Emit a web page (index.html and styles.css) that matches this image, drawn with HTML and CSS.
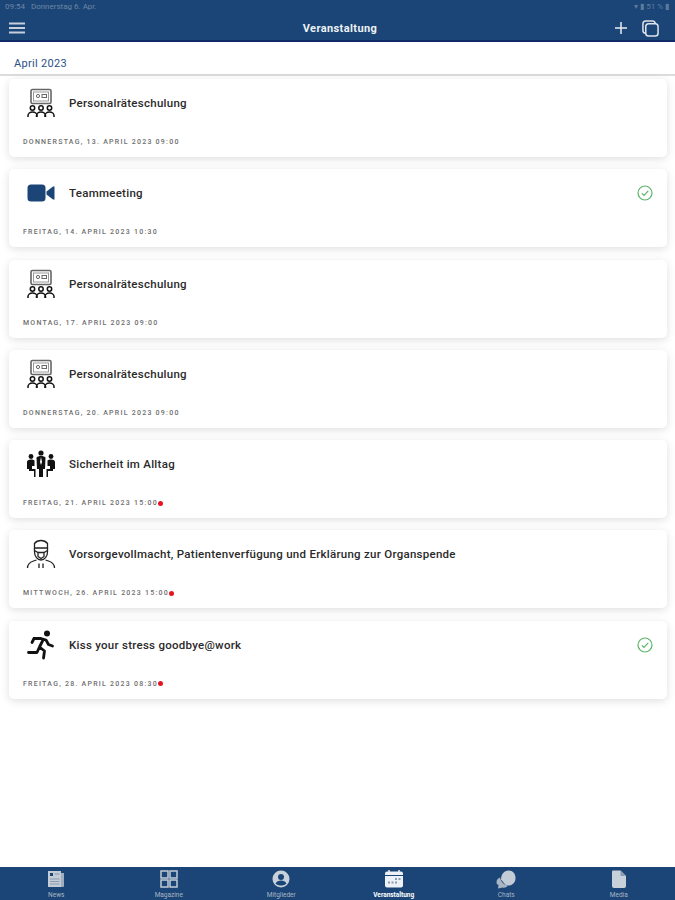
FILE: index.html
```html
<!DOCTYPE html>
<html lang="de">
<head>
    <meta charset="UTF-8">
    <meta name="viewport" content="width=device-width, initial-scale=1.0">
    <title>Veranstaltung</title>
    <link rel="stylesheet" href="styles.css">
</head>
<body>
    <svg class="defs" width="0" height="0">
        <symbol id="i-training" viewBox="0 0 30 30">
            <rect x="5" y="1.5" width="20" height="14" rx="1.5" fill="#fff" stroke="#666" stroke-width="1.6"/>
            <rect x="7.5" y="4" width="15" height="9" fill="none" stroke="#999" stroke-width="1"/>
            <circle cx="12" cy="8" r="1.6" fill="none" stroke="#666"/>
            <rect x="16" y="6.5" width="4.5" height="3" fill="none" stroke="#666"/>
            <g fill="none" stroke="#111" stroke-width="1.5">
                <circle cx="6.5" cy="20" r="2.2"/><path d="M2 29v-1.5c0-2 2-3.5 4.500-3.500s4.500 1.500 4.500 3.500V29"/>
                <circle cx="15" cy="20" r="2.2"/><path d="M10.500 29v-1.500c0-2 2-3.500 4.500-3.500s4.500 1.500 4.500 3.500V29"/>
                <circle cx="23.500" cy="20" r="2.200"/><path d="M19 29v-1.500c0-2 2-3.500 4.500-3.500s4.500 1.500 4.500 3.500V29"/>
            </g>
        </symbol>
        <symbol id="i-video" viewBox="0 0 30 30">
            <rect x="1.500" y="6.500" width="18" height="17" rx="3.500" fill="#1a4576"/>
            <path d="M20.500 13.500 27 8.500h1.500v13H27l-6.500-5z" fill="#1a4576"/>
        </symbol>
        <symbol id="i-meeting" viewBox="0 0 30 30">
            <g fill="#111">
                <circle cx="15" cy="4" r="2.600"/>
                <path d="M10.500 8.500c1-1 2.500-1.500 4.500-1.500s3.500.5 4.500 1.500L19 20h-2v8h-4v-8h-2z"/>
                <circle cx="5" cy="7.500" r="2.400"/>
                <path d="M1 13c0-1.500 1.500-2.500 4-2.500 1.500 0 2.500.3 3.500 1V17H6v3h3.500v8H8v-6H3v-2H1z"/>
                <circle cx="25" cy="7.500" r="2.400"/>
                <path d="M29 13c0-1.500-1.500-2.500-4-2.500-1.500 0-2.500.3-3.500 1V17H24v3h-3.500v8H22v-6h5v-2h2z"/>
            </g>
            <path d="m15 8-1 5 1 3 1-3z" fill="#fff"/>
        </symbol>
        <symbol id="i-doctor" viewBox="0 0 30 30">
            <g fill="none" stroke="#222" stroke-width="1.300">
                <path d="M8.500 9V4.500C10 2.500 12.500 1.500 15 1.500s5 1 6.500 3V9z"/>
                <path d="M8.500 9v4c0 4.500 3 8 6.500 8s6.500-3.500 6.500-8V9"/>
                <path d="M8.500 11.500 12 13.500h6l3.500-2M12 13.500v4l3 2 3-2v-4"/>
                <path d="M1.500 29c0-4 3-6 6-7l3-1M28.500 29c0-4-3-6-6-7l-3-1"/>
                <path d="M13 24.500V29M17 24.500V29"/>
            </g>
        </symbol>
        <symbol id="i-run" viewBox="0 0 30 30">
            <circle cx="21" cy="3.500" r="3" fill="#111"/>
            <path d="M8 8.500h7l5 1.500 2.500 4.500 4 1.500M17 10l-3.500 7 5 4-1 7M13 18l-2 4.500H2.500M8 8.500 6 12.500" fill="none" stroke="#111" stroke-width="2.800" stroke-linejoin="round" stroke-linecap="round"/>
        </symbol>
        <symbol id="i-check" viewBox="0 0 16 16">
            <circle cx="8" cy="8" r="7" fill="none" stroke="#5cb56a" stroke-width="1.200"/>
            <path d="m4.800 8.300 2.200 2.200 4.200-4.600" fill="none" stroke="#5cb56a" stroke-width="1.200"/>
        </symbol>
    </svg>

    <header class="topbar">
        <div class="status">
            <span>09:54 &nbsp; Donnerstag 6. Apr.</span>
            <span class="status-right">&#9662; &#9646; 51 % &#9646;</span>
        </div>
        <nav class="nav">
            <svg class="menu-icon" viewBox="0 0 16 12"><path d="M0 1.500h16M0 6h16M0 10.500h16" stroke="#c6cfdb" stroke-width="2"/></svg>
            <div class="nav-title">Veranstaltung</div>
            <div class="nav-actions">
                <svg class="plus-icon" viewBox="0 0 12 12"><path d="M6 0v12M0 6h12" stroke="#e8ecf1" stroke-width="1.500"/></svg>
                <svg class="copy-icon" viewBox="0 0 18 18" fill="none" stroke="#dfe4ea" stroke-width="1.600">
                    <rect x="1" y="1" width="13" height="13" rx="3"/>
                    <rect x="4" y="4" width="13" height="13" rx="3" fill="#1a4576"/>
                </svg>
            </div>
        </nav>
    </header>

    <div class="month">April 2023</div>

    <main class="list">
        <div class="card">
            <div class="card-top">
                <svg class="card-icon"><use href="#i-training"/></svg>
                <div class="card-title">Personalräteschulung</div>
            </div>
            <div class="card-date">Donnerstag, 13. April 2023 09:00</div>
        </div>
        <div class="card">
            <div class="card-top">
                <svg class="card-icon"><use href="#i-video"/></svg>
                <div class="card-title">Teammeeting</div>
                <svg class="check"><use href="#i-check"/></svg>
            </div>
            <div class="card-date">Freitag, 14. April 2023 10:30</div>
        </div>
        <div class="card">
            <div class="card-top">
                <svg class="card-icon"><use href="#i-training"/></svg>
                <div class="card-title">Personalräteschulung</div>
            </div>
            <div class="card-date">Montag, 17. April 2023 09:00</div>
        </div>
        <div class="card">
            <div class="card-top">
                <svg class="card-icon"><use href="#i-training"/></svg>
                <div class="card-title">Personalräteschulung</div>
            </div>
            <div class="card-date">Donnerstag, 20. April 2023 09:00</div>
        </div>
        <div class="card">
            <div class="card-top">
                <svg class="card-icon"><use href="#i-meeting"/></svg>
                <div class="card-title">Sicherheit im Alltag</div>
            </div>
            <div class="card-date">Freitag, 21. April 2023 15:00<span class="dot"></span></div>
        </div>
        <div class="card">
            <div class="card-top">
                <svg class="card-icon"><use href="#i-doctor"/></svg>
                <div class="card-title">Vorsorgevollmacht, Patientenverfügung und Erklärung zur Organspende</div>
            </div>
            <div class="card-date">Mittwoch, 26. April 2023 15:00<span class="dot"></span></div>
        </div>
        <div class="card">
            <div class="card-top">
                <svg class="card-icon"><use href="#i-run"/></svg>
                <div class="card-title">Kiss your stress goodbye@work</div>
                <svg class="check"><use href="#i-check"/></svg>
            </div>
            <div class="card-date">Freitag, 28. April 2023 08:30<span class="dot"></span></div>
        </div>
    </main>

    <footer class="tabbar">
        <div class="tab">
            <svg class="tab-icon" viewBox="0 0 20 20">
                <path d="M2 2h13v16H2z" fill="#c3cbd6"/><path d="M15 4h3v13a1 1 0 0 1-1 1h-2z" fill="#9fadc0"/>
                <path d="M4 4h3v3H4z" fill="#1a4576"/><path d="M8.500 5h5M4 10h9.500M4 12.500h9.500M4 15h9.500" stroke="#8b9bb0"/>
            </svg>
            <span>News</span>
        </div>
        <div class="tab">
            <svg class="tab-icon" viewBox="0 0 20 20" fill="none" stroke="#c3cbd6" stroke-width="1.500">
                <rect x="2" y="2" width="7" height="7"/><rect x="11" y="2" width="7" height="7"/>
                <rect x="2" y="11" width="7" height="7"/><rect x="11" y="11" width="7" height="7"/>
            </svg>
            <span>Magazine</span>
        </div>
        <div class="tab">
            <svg class="tab-icon" viewBox="0 0 20 20">
                <circle cx="10" cy="10" r="8.500" fill="#c8d0da"/>
                <circle cx="10" cy="8" r="3" fill="#1a4576"/>
                <path d="M4.500 14.500c1-2 3-3 5.500-3s4.500 1 5.500 3c-1.500 1.500-3.500 2-5.500 2s-4-.5-5.500-2z" fill="#1a4576"/>
            </svg>
            <span>Mitglieder</span>
        </div>
        <div class="tab tab-active">
            <svg class="tab-icon" viewBox="0 0 20 20">
                <rect x="1" y="2.500" width="18" height="16" rx="2" fill="#eef1f5"/>
                <path d="M5 1v3M15 1v3" stroke="#eef1f5" stroke-width="1.500"/>
                <path d="M1 6.500h18" stroke="#1a4576"/>
                <path d="M11 9h2v2h-2zM14.500 9h2v2h-2zM4 12.500h2v2H4zM7.500 12.500h2v2h-2zM11 12.500h2v2h-2z" fill="#8b9bb0"/>
            </svg>
            <span>Veranstaltung</span>
        </div>
        <div class="tab">
            <svg class="tab-icon" viewBox="0 0 20 20">
                <path d="M5 10.500C5 5.500 8 1.500 12.500 1.500S19.500 5 19.500 9c0 4.500-3 7-6 7.500H10z" fill="#c3cbd6"/>
                <path d="M.5 13c0-2 1.500-4 3.500-4.500.5 3.500 3.500 7 7.500 8.500-1 1.500-3 2-5 1.500L2 19.500l.5-3.500C1 15.500.5 14.500.5 13z" fill="#aab5c4"/>
            </svg>
            <span>Chats</span>
        </div>
        <div class="tab">
            <svg class="tab-icon" viewBox="0 0 20 20">
                <path d="M4 1.500h7.500L17 7v10a2 2 0 0 1-2 2H5a2 2 0 0 1-2-2V2.500a1 1 0 0 1 1-1z" fill="#c8d0da"/>
                <path d="M11.500 1.500V7H17" fill="#8b9bb0"/>
            </svg>
            <span>Media</span>
        </div>
    </footer>
</body>
</html>
```

FILE: styles.css
```css
* {
    margin: 0;
    padding: 0;
    box-sizing: border-box;
}
html, body {
    height: 900px;
    overflow: hidden;
}
body {
    display: flex;
    flex-direction: column;
    font-family: 'Roboto', sans-serif;
    background-color: #fff;
}
.defs {
    position: absolute;
}
.topbar {
    height: 42px;
    flex-shrink: 0;
    background-color: #1a4576;
    border-bottom: 2px solid #0f2a66;
    color: #fff;
}
.status {
    display: flex;
    justify-content: space-between;
    height: 16px;
    padding: 2px 6px 0 5px;
    font-size: 8px;
    line-height: 10px;
    color: #6d86a5;
}
.status-right {
    color: #5f7b9d;
}
.nav {
    display: flex;
    align-items: center;
    justify-content: space-between;
    height: 24px;
    padding: 0 16px 0 9px;
    position: relative;
}
.menu-icon {
    width: 16px;
    height: 12px;
}
.nav-title {
    position: absolute;
    left: 5px;
    right: 0;
    text-align: center;
    font-size: 11px;
    font-weight: 700;
    letter-spacing: .4px;
    color: #eef1f5;
}
.nav-actions {
    display: flex;
    align-items: center;
    gap: 15px;
}
.plus-icon {
    width: 12px;
    height: 12px;
}
.copy-icon {
    width: 17px;
    height: 17px;
}
.month {
    height: 34px;
    flex-shrink: 0;
    padding: 15px 14px 0;
    font-size: 11px;
    line-height: 14px;
    letter-spacing: .3px;
    color: #2c4f85;
    border-bottom: 2px solid #dcdcdc;
}
.list {
    flex: 1;
    display: flex;
    flex-direction: column;
    gap: 12.3px;
    padding: 3px 8px 0 9px;
    background-color: #fff;
}
.card {
    height: 78px;
    flex-shrink: 0;
    padding: 8px 14px 0 13px;
    display: flex;
    flex-direction: column;
    background-color: #fff;
    border-radius: 5px;
    box-shadow: 0 2px 9px rgba(0, 0, 0, .13);
}
.card-top {
    display: flex;
    align-items: center;
    height: 32px;
}
.card-icon {
    width: 30px;
    height: 30px;
    flex-shrink: 0;
    margin: 0 13px 0 4px;
}
.card-title {
    flex: 1;
    font-size: 11.5px;
    font-weight: 500;
    letter-spacing: .27px;
    color: #2a2a2a;
}
.check {
    width: 16px;
    height: 16px;
    flex-shrink: 0;
}
.card-date {
    margin-top: 18px;
    margin-left: 1px;
    display: flex;
    align-items: center;
    font-size: 7px;
    line-height: 10px;
    font-weight: 500;
    letter-spacing: 1.25px;
    text-transform: uppercase;
    color: #6e6e6e;
}
.dot {
    width: 5px;
    height: 5px;
    border-radius: 50%;
    background-color: #e8141c;
}
.tabbar {
    height: 33px;
    flex-shrink: 0;
    display: flex;
    background-color: #1a4576;
}
.tab {
    flex: 1;
    display: flex;
    flex-direction: column;
    align-items: center;
    padding-top: 2px;
    font-size: 6.5px;
    line-height: 8px;
    color: #aab5c4;
}
.tab-active {
    color: #fff;
    font-weight: 700;
}
.tab-icon {
    width: 20px;
    height: 20px;
    margin-bottom: 2px;
}
```
